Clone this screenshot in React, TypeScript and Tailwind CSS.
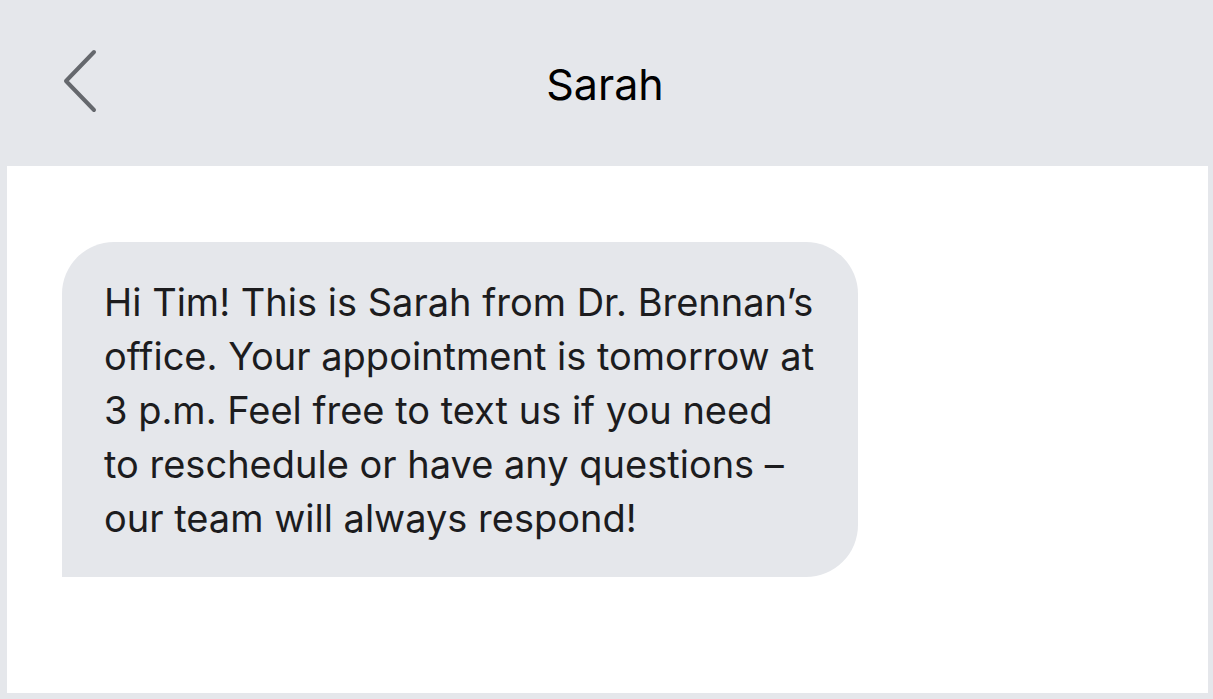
import React from "react";

function BackChevron() {
  return (
    <svg width="40" height="66" viewBox="0 0 40 66" fill="none" aria-hidden="true">
      <path
        d="M32 4 L4 33 L32 62"
        stroke="#65686d"
        strokeWidth="4"
        strokeLinecap="round"
        strokeLinejoin="round"
      />
    </svg>
  );
}

export default function App() {
  return (
    <div className="w-[1213px] h-[699px] bg-[#e5e7eb] flex flex-col pl-[2px] pr-[5px] pb-[6px] font-['Inter','Roboto',sans-serif]">
      <header className="relative h-[166px] shrink-0 flex items-center justify-center">
        <button className="absolute left-[60px] top-[48px]" aria-label="Back">
          <BackChevron />
        </button>
        <h1 className="text-[43px] leading-none text-black pt-[2px]">Sarah</h1>
      </header>
      <main className="flex-1 bg-white border-l-[5px] border-[#e5e7eb] pt-[76px] pl-[55px]">
        <div className="w-[796px] bg-[#e5e7eb] rounded-[52px] rounded-bl-none pt-[33px] pb-[32px] pl-[42px] text-[38px] leading-[54px] text-[#1c1c1e]">
          Hi Tim! This is Sarah from Dr. Brennan’s
          <br />
          office. Your appointment is tomorrow at
          <br />
          3 p.m. Feel free to text us if you need
          <br />
          to reschedule or have any questions –
          <br />
          our team will always respond!
        </div>
      </main>
    </div>
  );
}
